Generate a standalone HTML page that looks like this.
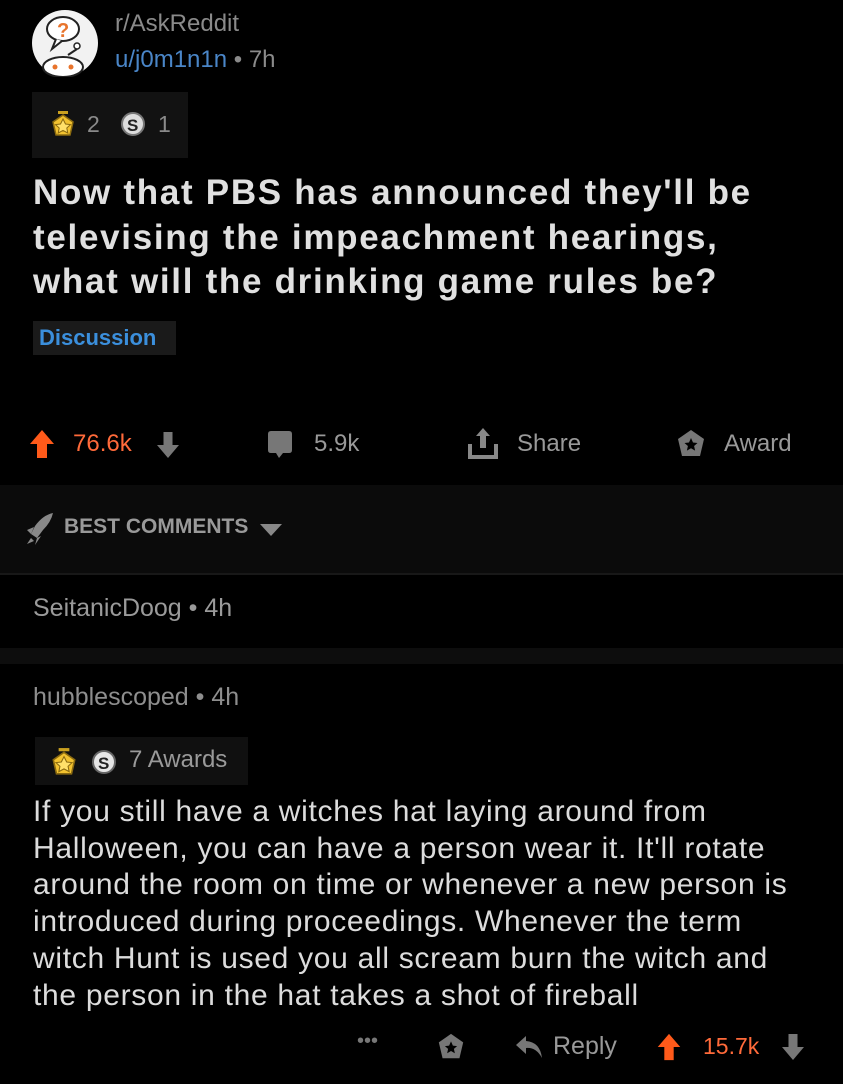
<!DOCTYPE html>
<html><head><meta charset="utf-8"><style>
*{margin:0;padding:0;box-sizing:border-box}
body{width:843px;height:1084px;background:#000;font-family:"Liberation Sans","DejaVu Sans",sans-serif;position:relative;overflow:hidden;color:#ddd}
.a{position:absolute;white-space:nowrap}
.gray{color:#8a8a8a}
</style></head><body>
<svg class="a" style="left:30px;top:9px" width="70" height="68" viewBox="0 0 70 68">
<circle cx="35" cy="34" r="33" fill="#f2f2f2"/>
<ellipse cx="33" cy="20" rx="16" ry="12" fill="#fff" stroke="#222" stroke-width="2"/>
<path d="M26 30 l-4 10 l10 -8" fill="#fff" stroke="#222" stroke-width="2"/>
<text x="27" y="28" font-size="20" font-weight="bold" fill="#e8742c" font-family="Liberation Sans">?</text>
<circle cx="47" cy="37" r="3" fill="#fff" stroke="#222" stroke-width="1.5"/>
<path d="M47 40 L38 46" stroke="#222" stroke-width="2"/>
<ellipse cx="33" cy="58" rx="20" ry="10" fill="#fff" stroke="#222" stroke-width="2"/>
<circle cx="25" cy="58" r="2.5" fill="#e8742c"/><circle cx="41" cy="58" r="2.5" fill="#e8742c"/>
</svg>
<div class="a gray" style="left:115px;top:10px;font-size:24px">r/AskReddit</div>
<div class="a" style="left:115px;top:46px;font-size:24px;color:#8a8a8a"><span style="color:#4a86c8">u/j0m1n1n</span> • 7h</div>
<div class="a" style="left:32px;top:92px;width:156px;height:66px;background:#121212"></div>
<svg class="a" style="left:51px;top:110px" width="24" height="28" viewBox="0 0 24 28"><path d="M12 5 L22 12 L19 25 L5 25 L2 12Z" fill="#f2c230" stroke="#8a6a10" stroke-width="1.5"/><path d="M12 9 l2.5 5 5 .6-3.7 3.4 1 5-4.8-2.6-4.8 2.6 1-5-3.7-3.4 5-.6z" fill="#ffe06a" stroke="#8a6a10" stroke-width="1"/><rect x="7" y="1" width="10" height="3" fill="#c9a020"/></svg>
<div class="a gray" style="left:87px;top:111px;font-size:23px">2</div>
<svg class="a" style="left:120px;top:111px" width="26" height="26" viewBox="0 0 26 26"><circle cx="13" cy="13" r="11" fill="#ddd" stroke="#777" stroke-width="2"/><text x="7" y="20" font-size="17" font-weight="bold" fill="#222" font-family="Liberation Sans">S</text></svg>
<div class="a gray" style="left:158px;top:111px;font-size:23px">1</div>
<div class="a" style="left:33px;top:171px;font-size:35px;line-height:44.5px;color:#e0e0e0;font-weight:bold;letter-spacing:1.7px">Now that PBS has announced they'll be<br>televising the impeachment hearings,<br>what will the drinking game rules be?</div>
<div class="a" style="left:33px;top:321px;width:143px;height:34px;background:#1a1a1a;color:#3b8fdc;font-weight:bold;font-size:22px;line-height:34px;padding-left:6px">Discussion</div>
<svg class="a" style="left:28px;top:428px" width="28" height="32" viewBox="0 0 28 32"><path d="M14 2 L26 16 H19 V30 H9 V16 H2Z" fill="#ff5a1a"/></svg>
<div class="a" style="left:73px;top:430px;font-size:24px;color:#ff6a3a">76.6k</div>
<svg class="a" style="left:155px;top:430px" width="26" height="30" viewBox="0 0 26 30"><path d="M13 28 L24 15 H17.5 V2 H8.5 V15 H2Z" fill="#777"/></svg>
<svg class="a" style="left:265px;top:430px" width="30" height="30" viewBox="0 0 30 30"><path d="M3 4 Q3 1 6 1 H24 Q27 1 27 4 V20 Q27 23 24 23 H18 L14 28 L11 23 H6 Q3 23 3 20Z" fill="#777"/></svg>
<div class="a" style="left:314px;top:430px;font-size:24px;color:#999">5.9k</div>
<svg class="a" style="left:466px;top:426px" width="34" height="34" viewBox="0 0 34 34"><path d="M17 2 L24 10 H20 V22 H14 V10 H10Z" fill="#888"/><path d="M4 18 V31 H30 V18" fill="none" stroke="#888" stroke-width="4"/></svg>
<div class="a" style="left:517px;top:430px;font-size:24px;color:#999">Share</div>
<svg class="a" style="left:675px;top:428px" width="32" height="32" viewBox="0 0 32 32"><path d="M16 2 L29 11 L25 28 H7 L3 11Z" fill="#777"/><path d="M16 10 l2 4.5 4.5.5-3.4 3 1 4.6-4.1-2.4-4.1 2.4 1-4.6-3.4-3 4.5-.5z" fill="#000"/></svg>
<div class="a" style="left:724px;top:430px;font-size:24px;color:#999">Award</div>
<div class="a" style="left:0;top:485px;width:843px;height:88px;background:#0b0b0b"></div>
<div class="a" style="left:0;top:573px;width:843px;height:2px;background:#181818"></div>
<svg class="a" style="left:25px;top:512px" width="30" height="34" viewBox="0 0 30 34"><path d="M28 1 Q18 3 10 14 L6 22 L12 26 L18 18 Q26 10 28 1Z" fill="#888"/><path d="M9 15 L2 18 L6 22Z M12 26 L10 33 L16 24Z" fill="#888"/><path d="M6 26 L2 32 L9 29Z" fill="#888"/></svg>
<div class="a" style="left:64px;top:515px;font-size:21px;font-weight:bold;color:#9a9a9a">BEST COMMENTS</div>
<svg class="a" style="left:258px;top:522px" width="26" height="16" viewBox="0 0 26 16"><path d="M2 2 H24 L13 14Z" fill="#888"/></svg>
<div class="a" style="left:33px;top:594px;font-size:25px;color:#9a9a9a">SeitanicDoog • 4h</div>
<div class="a" style="left:0;top:648px;width:843px;height:16px;background:#0d0d0d"></div>
<div class="a" style="left:33px;top:683px;font-size:25px;color:#8e8e8e">hubblescoped • 4h</div>
<div class="a" style="left:35px;top:737px;width:213px;height:48px;background:#101010"></div>
<svg class="a" style="left:51px;top:747px" width="26" height="30" viewBox="0 0 24 28"><path d="M12 5 L22 12 L19 25 L5 25 L2 12Z" fill="#f2c230" stroke="#8a6a10" stroke-width="1.5"/><path d="M12 9 l2.5 5 5 .6-3.7 3.4 1 5-4.8-2.6-4.8 2.6 1-5-3.7-3.4 5-.6z" fill="#ffe06a" stroke="#8a6a10" stroke-width="1"/><rect x="7" y="1" width="10" height="3" fill="#c9a020"/></svg>
<svg class="a" style="left:91px;top:748px" width="26" height="28" viewBox="0 0 26 26"><circle cx="13" cy="13" r="11" fill="#e6e6e6" stroke="#666" stroke-width="2"/><text x="7" y="20" font-size="17" font-weight="bold" fill="#222" font-family="Liberation Sans">S</text></svg>
<div class="a" style="left:129px;top:746px;font-size:24px;color:#9a9a9a">7 Awards</div>
<div class="a" style="left:33px;top:794px;font-size:30px;line-height:36.7px;color:#dcdcdc;letter-spacing:0.7px">If you still have a witches hat laying around from<br>Halloween, you can have a person wear it. It'll rotate<br>around the room on time or whenever a new person is<br>introduced during proceedings. Whenever the term<br>witch Hunt is used you all scream burn the witch and<br>the person in the hat takes a shot of fireball</div>
<div class="a" style="left:357px;top:1030px;font-size:20px;color:#777">•••</div>
<svg class="a" style="left:436px;top:1032px" width="30" height="30" viewBox="0 0 32 32"><path d="M16 2 L29 11 L25 28 H7 L3 11Z" fill="#777"/><path d="M16 10 l2 4.5 4.5.5-3.4 3 1 4.6-4.1-2.4-4.1 2.4 1-4.6-3.4-3 4.5-.5z" fill="#000"/></svg>
<svg class="a" style="left:514px;top:1034px" width="30" height="26" viewBox="0 0 30 26"><path d="M12 2 L2 11 L12 20 V14 Q22 13 28 24 Q26 8 12 7Z" fill="#777"/></svg>
<div class="a" style="left:553px;top:1032px;font-size:25px;color:#999">Reply</div>
<svg class="a" style="left:655px;top:1032px" width="28" height="30" viewBox="0 0 28 32"><path d="M14 2 L26 16 H19 V30 H9 V16 H2Z" fill="#ff5a1a"/></svg>
<div class="a" style="left:703px;top:1033px;font-size:23px;color:#ff6a3a">15.7k</div>
<svg class="a" style="left:780px;top:1032px" width="26" height="30" viewBox="0 0 26 30"><path d="M13 28 L24 15 H17.5 V2 H8.5 V15 H2Z" fill="#777"/></svg>
</body></html>
